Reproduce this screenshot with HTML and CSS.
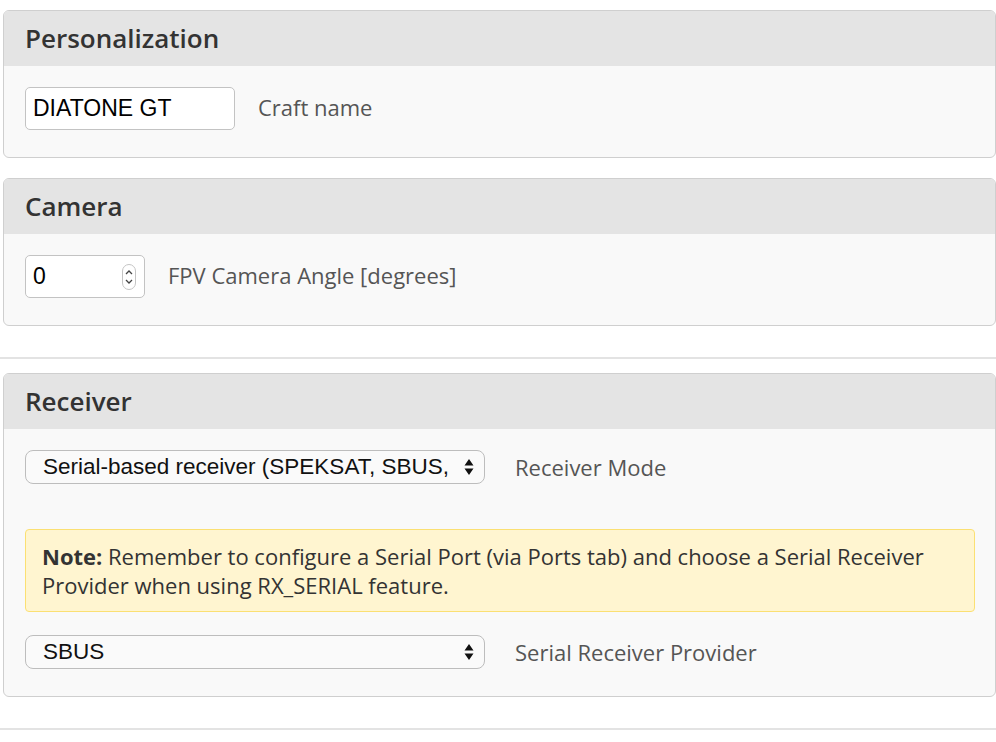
FILE: index.html
```html
<!DOCTYPE html>
<html>
<head>
<meta charset="utf-8">
<link rel="stylesheet" href="styles.css">
</head>
<body>
<div class="page">
  <section class="panel">
    <div class="panel-head">Personalization</div>
    <div class="panel-body">
      <div class="row">
        <div class="field text-field"><input class="field-input" type="text" value="DIATONE GT"></div>
        <span class="label">Craft name</span>
      </div>
    </div>
  </section>

  <section class="panel">
    <div class="panel-head">Camera</div>
    <div class="panel-body">
      <div class="row">
        <div class="field num-field">
          <input class="field-input" type="text" value="0">
          <svg class="spinner" width="14" height="26" viewBox="0 0 14 26">
            <rect x="0.5" y="0.5" width="13" height="25" rx="6.5" fill="#fff" stroke="#c4c4c4"/>
            <path d="M4 10 L7 7 L10 10" fill="none" stroke="#444" stroke-width="1.3"/>
            <path d="M4 16 L7 19 L10 16" fill="none" stroke="#444" stroke-width="1.3"/>
          </svg>
        </div>
        <span class="label">FPV Camera Angle [degrees]</span>
      </div>
    </div>
  </section>

  <hr class="sep">

  <section class="panel">
    <div class="panel-head">Receiver</div>
    <div class="panel-body">
      <div class="row">
        <div class="select-wrap">
          <div class="select">Serial-based receiver (SPEKSAT, SBUS,</div>
          <svg class="arrows" width="10" height="18" viewBox="0 0 10 18"><path d="M5 1 L9.5 7.5 L0.5 7.5 Z M5 17 L9.5 10.5 L0.5 10.5 Z" fill="#111"/></svg>
        </div>
        <span class="label select-label">Receiver Mode</span>
      </div>
      <div class="note"><b>Note:</b> Remember to configure a Serial Port (via Ports tab) and choose a Serial Receiver Provider when using RX_SERIAL feature.</div>
      <div class="row">
        <div class="select-wrap">
          <div class="select">SBUS</div>
          <svg class="arrows" width="10" height="18" viewBox="0 0 10 18"><path d="M5 1 L9.5 7.5 L0.5 7.5 Z M5 17 L9.5 10.5 L0.5 10.5 Z" fill="#111"/></svg>
        </div>
        <span class="label select-label">Serial Receiver Provider</span>
      </div>
    </div>
  </section>

  <hr class="sep">
</div>
</body>
</html>
```
FILE: styles.css
```css
html, body {
  margin: 0;
  padding: 0;
  background: #fff;
}
.page {
  padding-top: 10px;
  font-family: "Open Sans", "Liberation Sans", sans-serif;
}
.panel {
  margin: 0 0 20px 3px;
  border: 1.5px solid #cfcfcf;
  border-radius: 6px;
  overflow: hidden;
  background: #f9f9f9;
}
.panel-head {
  background: #e4e4e4;
  height: 55px;
  line-height: 55px;
  padding-left: 21px;
  font-size: 26px;
  font-weight: 600;
  color: #333;
}
.panel-body {
  padding: 21px 20px 27px 21px;
}
.row {
  display: flex;
  align-items: center;
}
.field {
  box-sizing: border-box;
  height: 43px;
  border: 1.5px solid #c3c3c3;
  border-radius: 5px;
  background: #fff;
  display: flex;
  align-items: center;
}
.text-field { width: 210px; margin-right: 23px; }
.num-field { width: 120px; margin-right: 23px; padding-right: 8px; }
.field-input {
  border: 0;
  outline: none;
  background: transparent;
  font-family: "Liberation Sans", Arial, sans-serif;
  font-size: 23px;
  color: #000;
  padding: 0 0 0 7px;
  width: 100%;
  min-width: 0;
}
.spinner { flex: none; }
.label {
  font-size: 22px;
  color: #555;
  margin-top: -4px;
}
.select-wrap {
  position: relative;
  width: 460px;
  margin-right: 30px;
}
.select {
  box-sizing: border-box;
  height: 34px;
  line-height: 31px;
  border: 1.5px solid #bdbdbd;
  border-radius: 8px;
  background: #fafafa;
  font-family: "Liberation Sans", Arial, sans-serif;
  font-size: 22.5px;
  color: #111;
  padding-left: 17px;
  white-space: nowrap;
  overflow: hidden;
}
.select-label { margin-top: 0; }
.arrows {
  position: absolute;
  right: 11px;
  top: 8px;
}
.note {
  margin: 45px 0 23px 0;
  background: #fff5d0;
  border: 1.5px solid #fbe073;
  border-radius: 4px;
  padding: 12px 16px 11px 16px;
  font-size: 22px;
  line-height: 29px;
  color: #333;
}
.note b { font-weight: 700; }
.sep {
  border: 0;
  height: 2px;
  background: #e3e3e3;
  margin: 31px 0 14px 0;
}
```
